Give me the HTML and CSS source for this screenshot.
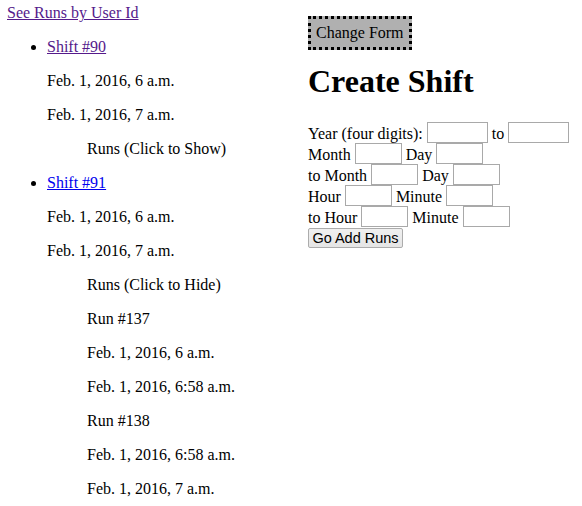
FILE: index.html
```html
<!DOCTYPE html>
<html>
<head>
<meta charset="utf-8">
<link rel="stylesheet" href="styles.css">
</head>
<body>
<div class="page">
  <div class="left">
    <a class="visited" href="#">See Runs by User Id</a>
    <ul class="shifts">
      <li>
        <a class="visited" href="#">Shift #90</a>
        <p>Feb. 1, 2016, 6 a.m.</p>
        <p>Feb. 1, 2016, 7 a.m.</p>
        <div class="runs">
          <p>Runs (Click to Show)</p>
        </div>
      </li>
      <li>
        <a class="fresh" href="#">Shift #91</a>
        <p>Feb. 1, 2016, 6 a.m.</p>
        <p>Feb. 1, 2016, 7 a.m.</p>
        <div class="runs">
          <p>Runs (Click to Hide)</p>
          <p>Run #137</p>
          <p>Feb. 1, 2016, 6 a.m.</p>
          <p>Feb. 1, 2016, 6:58 a.m.</p>
          <p>Run #138</p>
          <p>Feb. 1, 2016, 6:58 a.m.</p>
          <p>Feb. 1, 2016, 7 a.m.</p>
        </div>
      </li>
    </ul>
  </div>
  <div class="right">
    <div class="toggle">Change Form</div>
    <h1>Create Shift</h1>
    <form class="form">
      <div class="row">Year (four digits): <input class="wide" type="text"> to <input class="wide" type="text"></div>
      <div class="row">Month <input class="narrow" type="text"> Day <input class="narrow" type="text"></div>
      <div class="row">to Month <input class="narrow" type="text"> Day <input class="narrow" type="text"></div>
      <div class="row">Hour <input class="narrow" type="text"> Minute <input class="narrow" type="text"></div>
      <div class="row">to Hour <input class="narrow" type="text"> Minute <input class="narrow" type="text"></div>
      <div class="row"><button class="submit" type="button">Go Add Runs</button></div>
    </form>
  </div>
</div>
</body>
</html>
```

FILE: styles.css
```css
html, body {
  margin: 0;
  padding: 0;
  background: #ffffff;
}
body {
  font-family: "Liberation Serif", "Times New Roman", serif;
  font-size: 16px;
  color: #000;
}
.page {
  display: flex;
  align-items: flex-start;
  padding: 4px 8px 0 7px;
}
.left {
  width: 301px;
  flex: 0 0 301px;
  line-height: 18px;
}
a {
  text-decoration: underline;
}
a.visited {
  color: #551a8b;
}
a.fresh {
  color: #0000ee;
}
.shifts {
  margin: 16px 0 0 0;
  padding-left: 40px;
}
.shifts p {
  margin: 16px 0;
}
.runs {
  margin: 16px 0 16px 40px;
}
.right {
  flex: 1;
  padding-top: 12px;
}
.toggle {
  display: inline-block;
  background: #b0b0b0;
  border: 3px dotted #000;
  padding: 5px 5px 5px 5px;
  line-height: 18px;
}
h1 {
  font-size: 32px;
  font-weight: bold;
  margin: 13px 0 0 0;
  line-height: 37px;
}
.form {
  margin-top: 22px;
}
.row {
  height: 21px;
  line-height: 18px;
}
input {
  box-sizing: border-box;
  height: 21px;
  border: 1px solid #a9a9a9;
  padding: 1px 2px;
  margin: 0;
  font-family: "Liberation Sans", Arial, sans-serif;
  font-size: 13.33px;
  vertical-align: bottom;
  background: #fff;
}
.wide {
  width: 61px;
}
.narrow {
  width: 47px;
}
.submit {
  box-sizing: border-box;
  height: 20px;
  width: 95px;
  margin: 1px 0 0 0;
  padding: 0;
  font-family: "Liberation Sans", Arial, sans-serif;
  font-size: 14.5px;
  color: #000;
  border: 1px solid #acacac;
  border-radius: 2px;
  background: linear-gradient(#f0f0f0, #e5e5e5);
  vertical-align: top;
}
```
